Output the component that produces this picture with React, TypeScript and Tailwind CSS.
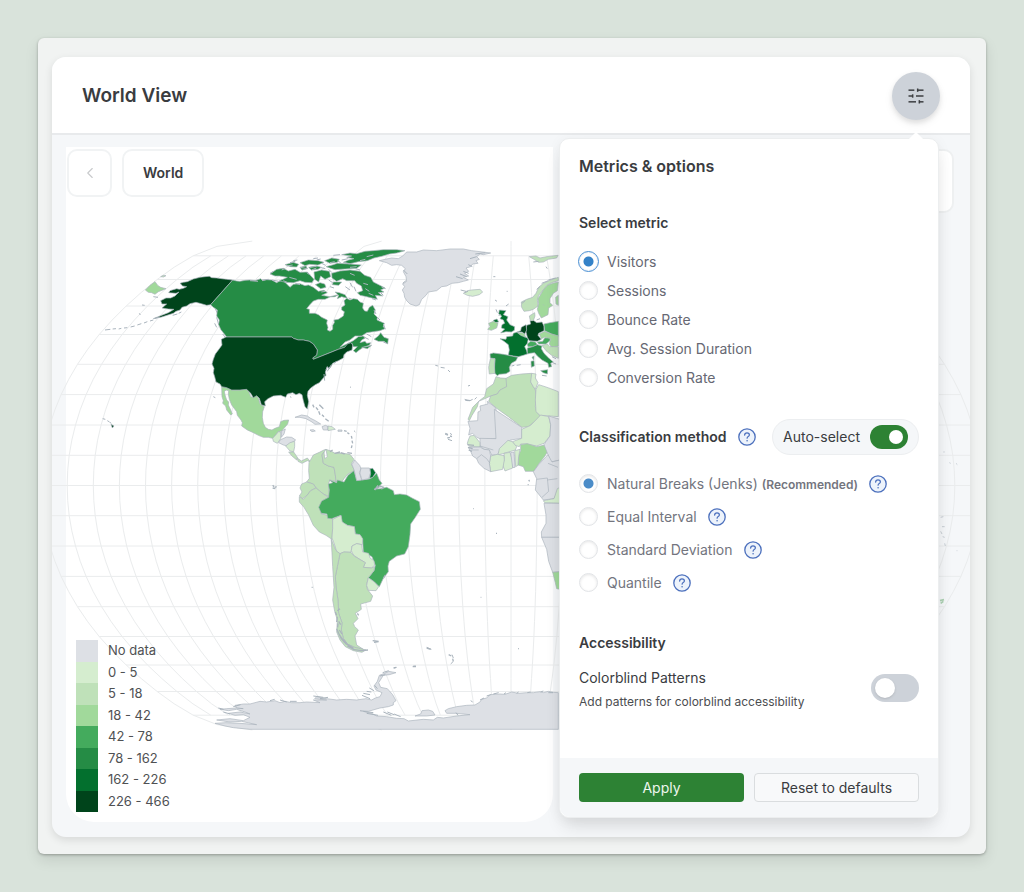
import { useState } from "react";
import type { ReactNode } from "react";
import { ChevronLeft, SlidersHorizontal } from "lucide-react";

/* ---------- map geometry ---------- */

const SCALE = 171.8;
const CENTER_X = 511;
const CENTER_Y = 485.5;

// Natural Earth projection
function project(lonDeg: number, latDeg: number): string {
  const lon = (lonDeg * Math.PI) / 180;
  const lat = (latDeg * Math.PI) / 180;
  const p2 = lat * lat;
  const p4 = p2 * p2;
  const x = lon * (0.8707 - 0.131979 * p2 + p4 * (-0.013791 + p4 * (0.003971 * p2 - 0.001529 * p4)));
  const y = lat * (1.007226 + p2 * (0.015085 + p4 * (-0.044475 + 0.028874 * p2 - 0.005916 * p4)));
  return `${(CENTER_X + SCALE * x).toFixed(1)},${(CENTER_Y - SCALE * y).toFixed(1)}`;
}

function buildGraticule(): string {
  const lines: string[] = [];
  for (let lon = -180; lon <= 180; lon += 10) {
    const limit = lon % 90 === 0 ? 90 : 80;
    const pts: string[] = [];
    for (let lat = -limit; lat <= limit; lat += 5) pts.push(project(lon, lat));
    lines.push("M" + pts.join("L"));
  }
  for (let lat = -80; lat <= 80; lat += 10) {
    lines.push("M" + project(-180, lat) + "L" + project(180, lat));
  }
  return lines.join("");
}

const graticule = buildGraticule();

const C = {
  none: "#dde0e5",
  c1: "#d5edcf",
  c2: "#bfe1b9",
  c3: "#a1d99b",
  c4: "#44ab5d",
  c5: "#258c45",
  c6: "#03702e",
  c7: "#00441b",
  coast: "#aab4bd",
};

type Shape = [string, string];

const pacific: Shape[] = [
  [C.c7, "578,150 560,148 545,146 530,144 515,143 508,139 495,140 480,142 460,147 442,155 430,157 420,160 428,168 440,170 430,175 418,178 410,176 390,182 386,188 408,190 417,186 405,198 392,204 378,204 362,212 366,222 380,222 366,234 385,237 402,238 385,248 362,257 340,266 365,261 400,250 408,244 420,240 426,232 440,228 450,221 468,217 484,221 500,226 512,224"],
  [C.c3, "316,180 330,166 345,155 354,167 362,172 378,176 366,181 355,185 345,193 335,188 325,187"],
  [C.c2, "362,140 370,136 378,137 371,141"],
  [C.c3, "545,470 560,473 575,480 600,480 620,477 628,488 632,500 640,502 650,497 656,506 660,522 673,530 668,545 667,562 670,580 676,592 685,598 696,600 705,595 718,590 722,575 732,571 746,570 743,582 732,595 725,603 715,605 710,612 698,625 685,622 670,622 655,616 640,608 622,600 605,588 607,578 603,570 592,556 590,545 575,525 568,508 565,492 566,482 558,480 553,485 556,498 560,510 566,516 565,525 572,540 577,552 572,555 560,540 557,528 548,520 550,512 546,500"],
  [C.c1, "698,625 710,612 715,605 722,606 722,626 712,640 700,634"],
  [C.none, "725,603 736,597 732,612 724,622"],
  [C.none, "720,630 740,621 755,622 767,630 752,640 742,648 730,645 716,638"],
  [C.c7, "213,583 222,588 217,594"],
];

const pacificSpecks =
  "M195,300l16,-2M218,297l10,-1M236,297l8,-2M252,294l10,-1M272,291l12,-3M292,285l12,-4M312,279l10,-4M330,273l10,-3M345,265l14,-4M188,566l8,2M202,572l5,3M208,576l6,4M340,200l14,2M306,225l8,1M298,250l3,5M398,256l14,-4M416,250l8,-4M526,236l8,18M532,232l10,20M538,252l8,26M530,262l6,22M524,280l6,12M538,284l10,18M545,300l8,10M540,232l4,16M548,312l16,20M556,306l8,16M520,500l6,3M750,500l4,2M600,155l20,1M630,154l30,-1M670,152l20,4M534,244l6,30M542,270l4,20";

const atlanticNorth: Shape[] = [
  [C.c5, "-52,150 -40,153 -30,154 -15,151 0,150 15,152 32,146 38,152 50,149 65,150 80,158 95,150 105,157 120,172 130,163 150,161 165,167 175,165 190,172 205,184 222,181 232,188 215,196 240,200 265,194 255,200 240,201 225,208 205,208 190,213 178,226 170,236 178,238 178,250 195,250 205,254 215,262 232,270 230,280 234,292 232,300 240,304 248,298 248,286 253,278 252,270 265,268 280,258 283,245 275,240 275,232 285,225 282,212 290,205 300,210 310,206 322,208 330,216 340,220 338,234 344,243 352,244 358,232 368,226 376,240 372,252 382,262 381,270 403,280 400,290 405,296 390,302 370,305 350,308 335,318 315,318 300,330 285,336 270,352 290,342 310,332 325,320 340,318 346,324 335,330 330,338 345,334 350,340 362,338 358,346 340,352 328,360 318,368 310,362 322,350 310,350 306,340 295,342 284,352 265,358 240,368 215,378 190,388 188,384 200,375 202,360 190,342 178,334 160,330 145,330 130,325 126,321 -70,321 -80,308 -88,298 -94,284 -92,270 -100,258 -98,240 -110,232 -118,224"],
  [C.c7, "-72,321 126,321 130,325 145,330 160,330 178,334 190,342 202,360 200,375 188,384 190,388 215,378 240,368 265,358 284,352 292,342 303,338 308,345 306,360 290,366 282,374 280,384 265,392 248,400 244,408 238,416 232,410 226,426 228,436 218,446 208,458 196,464 182,474 174,484 172,496 176,515 172,537 165,530 160,512 156,494 148,490 138,494 128,488 112,492 107,502 92,496 70,498 54,506 44,515 46,528 34,524 28,505 20,497 10,503 2,490 -10,478 -30,480 -55,480 -70,473 -85,470 -90,462 -102,456 -106,440 -110,428 -108,415 -114,402 -110,388 -104,372 -92,356 -84,345 -86,328"],
  [C.c5, "275,74 300,69 320,71 345,64 370,62 400,59 440,59 465,62 440,69 418,72 395,79 372,84 352,92 325,95 300,101 280,97 296,90 312,86 290,82 305,78"],
  [C.c5, "60,132 80,118 100,115 115,123 135,118 150,127 172,126 182,137 192,148 186,158 165,157 150,152 130,158 108,157 88,153 112,142 88,138 75,138"],
  [C.c5, "150,98 175,90 205,92 222,97 204,105 178,103 165,107"],
  [C.c5, "105,104 130,97 146,103 140,111 122,110"],
  [C.c5, "224,92 245,84 268,88 262,97 240,100"],
  [C.c5, "228,110 250,104 262,100 300,102 334,105 320,115 285,117 255,119"],
  [C.c5, "192,126 215,120 238,124 242,140 225,148 212,138 206,156 194,148"],
  [C.c5, "176,112 200,108 214,112 204,118 184,120"],
  [C.c5, "150,112 168,108 172,116 156,120"],
  [C.c5, "245,130 270,123 300,120 330,124 344,136 362,142 370,156 386,164 405,174 392,180 402,186 385,188 398,198 376,196 382,208 362,203 345,199 330,196 322,188 338,182 334,168 320,160 314,152 290,152 278,146 260,154 246,144"],
  [C.c5, "196,164 210,158 224,162 228,172 212,176"],
  [C.c5, "250,156 275,156 266,166 247,164"],
  [C.c5, "255,186 268,188 285,194 292,205 275,200 262,206 266,196"],
  [C.c5, "372,328 385,318 392,308 402,322 415,326 413,342 402,334 385,334"],
  [C.c5, "335,352 350,350 365,346 352,356"],
  [C.none, "388,92 405,88 425,84 445,86 458,78 470,66 500,66 520,60 560,62 600,57 640,57 665,62 690,65 722,69 700,74 690,72 680,80 688,88 678,92 684,100 668,102 662,110 648,114 656,124 644,130 656,138 640,142 655,150 640,154 625,158 605,160 590,168 575,170 560,182 535,186 528,196 515,208 508,224 498,228 480,222 470,212 464,202 462,190 457,180 464,170 458,162 470,154 468,140 460,125 466,116 455,106 440,104 425,106 410,98"],
  [C.c1, "640,190 652,182 665,180 690,178 698,186 688,194 668,199 652,196"],
  [C.c2, "838,80 858,78 870,84 890,80 924,76 920,84 895,88 880,96 866,97 852,88"],
  [C.c6, "748,240 768,242 760,254 774,260 770,270 780,284 794,290 793,301 784,306 768,305 752,309 764,297 754,294 756,284 764,280 760,270 750,266 755,258 746,252"],
  [C.c6, "730,271 741,267 746,276 734,278"],
  [C.c3, "716,280 730,274 744,280 740,294 724,301 713,298 720,290"],
  [C.c6, "750,326 768,328 770,320 788,318 790,310 802,306 815,314 835,326 832,340 824,350 830,362 832,372 820,376 805,380 790,378 775,375 778,360 775,344 762,334"],
  [C.c5, "720,372 730,369 760,373 775,376 803,382 798,392 784,400 778,412 780,424 768,431 748,433 742,437 733,428 735,386 721,384"],
  [C.c2, "721,386 735,386 733,405 735,430 718,432 716,412"],
  [C.c7, "830,286 842,282 840,272 850,271 860,278 876,276 882,288 882,302 866,310 864,316 874,328 862,334 838,332 832,322 828,306"],
  [C.c7, "802,306 812,302 814,292 828,284 830,300 824,312 816,306"],
  [C.c3, "802,308 816,308 824,313 826,322 812,316"],
  [C.c4, "882,282 900,278 925,274 925,318 905,312 884,302"],
  [C.c4, "832,342 842,334 856,336 862,344 848,350 834,350"],
  [C.c4, "862,336 878,334 884,324 900,322 900,332 888,342 866,342"],
  [C.c3, "868,312 884,304 904,312 925,318 925,348 905,352 898,342 902,326 884,322 874,326"],
  [C.c2, "876,346 892,342 900,350 925,350 925,385 905,376 888,362"],
  [C.c5, "832,354 848,350 862,344 876,348 874,356 882,370 896,384 910,396 902,400 905,410 896,412 894,400 876,390 862,378 854,368 840,370 832,372"],
  [C.c5, "872,422 893,419 892,432 880,428"],
  [C.c5, "843,394 852,392 853,408 844,412"],
  [C.c5, "846,382 852,378 851,390"],
  [C.c2, "814,216 830,208 848,202 858,190 866,172 880,160 902,150 925,142 925,152 905,158 890,166 880,180 866,196 862,210 864,228 850,238 838,242 822,244 815,232"],
  [C.c3, "864,206 880,180 892,166 908,160 925,156 922,182 910,190 900,206 900,218 908,226 896,234 894,254 874,264 866,250 862,238 866,222"],
  [C.c3, "917,202 925,196 925,226 918,222"],
  [C.c2, "838,258 854,248 855,258 850,272 841,272"],
  [C.c2, "738,440 752,444 768,445 773,458 770,470 748,482 742,492 722,498 700,508 686,514 682,530 666,556 658,572 654,568 668,532 688,512 704,500 710,476 730,462"],
  [C.c2, "768,445 785,436 815,432 845,430 846,444 842,456 856,480 858,500 856,530 860,545 872,560 835,590 816,592 775,560 740,535 716,514 722,498 742,492 750,480 770,470"],
  [C.c1, "845,430 858,432 856,444 864,458 856,478 850,470 842,456"],
  [C.c1, "866,464 885,470 902,476 925,485 925,560 900,558 870,556 858,545 856,510 858,478"],
  [C.none, "654,574 683,572 684,546 692,542 690,528 714,522 712,514 738,534 740,625 695,628 680,622 668,610 656,615 660,595"],
];

const northSpecks =
  "M275,90l20,-4M240,98l14,-3M200,90l12,-3M120,98l16,-4M110,108l18,-3M180,112l20,-3M215,100l12,6M150,112l22,4M300,112l20,-2M60,130l10,-6M95,120l10,-4M185,120l14,-6M236,118l10,10M330,92l16,-4M350,80l20,-5M390,186l10,10M366,206l12,4M395,172l12,4M372,240l6,12M382,262l8,8M400,282l6,16M655,104l12,6M640,124l16,6M630,132l20,8M618,140l20,6M660,86l20,-6M676,72l30,-4M460,120l12,12M458,160l10,-8M632,180l16,4M644,188l10,-4M850,96l16,-2M816,220l10,-8M860,178l10,-8M875,160l20,-8M895,150l22,-6M735,210l6,4M738,238l4,10M746,258l6,-6M768,228l8,-6M730,140l6,0M556,406l8,2M572,412l12,2M594,420l6,6M654,468l6,-2M644,508l8,4M660,512l8,-4M674,508l6,-6M300,472l3,-1M785,408l8,-2M800,406l12,-2M876,436l14,2M908,398l10,4M906,380l12,6M585,612l8,4M600,610l6,4M594,628l12,4M312,602l4,4M222,432l2,20M228,420l4,-10M236,418l8,-14M880,224l2,2M860,270l10,-4M888,110l4,6M770,184l3,0M350,312l14,8M340,320l16,8M66,150l20,4M0,152l24,2M36,150l20,-2M285,98l14,4M262,92l10,6M210,112l16,4M130,92l12,-2M190,86l14,-2M250,76l20,-2M316,116l14,4M170,128l12,8M118,142l22,6M236,150l12,8M300,158l8,14M312,170l6,14M286,170l14,10M240,170l12,4M214,186l12,-2M296,204l10,4M346,176l12,8M356,190l14,6M340,160l14,4M300,130l14,6M400,336l10,4M100,152l14,6M136,160l14,4M240,410l-8,14M252,400l8,-6";

const south: Shape[] = [
  [C.c1, "77,138 90,128 104,124 104,140 101,155 90,153"],
  [C.c2, "86,156 101,156 112,172 110,180 96,168"],
  [C.c2, "112,174 124,183 142,174 152,186 142,182 126,190 114,184"],
  [C.none, "105,52 125,45 142,48 152,55 166,62 182,72 165,73 156,66 138,56 120,52"],
  [C.none, "186,80 196,76 204,79 203,90 190,90"],
  [C.c1, "204,78 216,80 226,88 214,90 204,92"],
  [C.none, "150,90 160,89 166,93 156,95"],
  [C.none, "234,90 246,90 246,94 234,94"],
  [C.c2, "147,188 160,165 178,157 192,150 198,148 186,165 190,190 205,198 222,202 226,225 228,245 210,240 206,250 208,290 190,282 172,268 160,252 140,246 148,235 146,212"],
  [C.c2, "198,148 215,154 225,160 250,160 270,163 282,178 274,192 284,212 264,222 252,236 245,246 228,245 226,225 222,202 205,198 190,190 186,165 192,156 194,176 202,170"],
  [C.c2, "125,252 140,246 160,252 168,264 152,272 142,285 128,296 118,288 126,276 120,264"],
  [C.c2, "118,290 130,298 142,285 152,272 168,264 190,282 206,292 186,303 178,320 184,342 205,346 218,356 218,380 216,418 198,406 178,396 160,376 146,345 132,322 118,306"],
  [C.c4, "208,240 230,248 232,240 252,246 264,226 282,212 286,226 290,241 305,240 328,237 338,232 350,220 358,240 366,250 355,262 342,268 362,266 380,262 400,272 403,284 420,282 440,285 456,294 478,305 481,328 466,352 452,372 450,404 445,440 434,462 410,468 388,484 384,498 385,515 370,535 358,560 342,545 325,533 342,512 346,496 336,470 310,456 308,418 300,404 286,402 283,380 262,376 245,366 243,346 215,356 203,355 201,342 184,340 176,322 185,303 206,292 208,270 205,252 218,248"],
  [C.none, "283,212 276,194 284,180 299,196 303,206 298,218 305,240 290,242"],
  [C.none, "303,204 328,204 332,218 326,236 306,240 300,220"],
  [C.c6, "330,206 338,205 347,218 338,232 329,235 332,220"],
  [C.c1, "218,358 243,346 247,366 262,376 283,380 286,402 300,404 308,416 307,434 290,431 276,438 273,457 252,456 240,461 230,455 224,435 216,414 218,385"],
  [C.c1, "276,438 290,431 305,434 308,456 326,460 330,474 342,482 344,496 334,504 310,502 316,488 296,476 280,465 274,452"],
  [C.c2, "240,461 252,456 273,457 282,468 316,488 310,502 334,504 344,500 342,512 325,533 320,552 322,568 338,588 332,604 302,612 304,628 286,640 294,656 280,670 284,680 295,690 285,708 290,735 310,748 284,742 262,732 250,715 244,690 246,668 236,640 234,600 228,560 226,530 232,500"],
  [C.c2, "214,418 228,452 240,461 232,500 226,530 228,560 234,600 236,640 246,668 244,690 250,715 262,732 284,742 318,750 306,757 280,752 256,740 240,720 230,696 232,660 224,634 218,600 222,562 218,500"],
  [C.c1, "325,533 342,545 356,560 348,572 325,571 320,556"],
  [C.none, "660,138 660,115 708,116 703,28 785,82 785,115 752,120 722,145 712,165 695,165 688,150 672,148"],
  [C.c1, "785,88 812,76 842,45 866,50 872,74 870,108 852,130 830,138 800,132 782,132 778,140 765,136 757,125 785,115"],
  [C.c3, "782,134 802,131 830,140 850,136 862,134 866,150 852,172 836,192 822,214 796,214 790,200 774,195 776,165 782,152"],
  [C.c1, "714,165 718,146 744,121 757,125 770,140 766,150 746,156 732,160"],
  [C.c1, "732,160 750,157 757,180 758,204 735,213 728,195 733,178"],
  [C.c1, "692,168 712,163 732,167 733,180 728,208 692,215 688,190"],
  [C.none, "752,158 762,156 765,202 758,203"],
  [C.c1, "764,152 780,148 776,170 774,196 767,200"],
  [C.c1, "625,120 630,108 642,106 660,128 660,141 628,139 622,130"],
  [C.none, "625,142 660,141 672,148 688,150 692,168 688,190 692,215 672,205 656,190 650,176 638,168 632,154"],
  [C.none, "866,48 900,58 900,180 872,186 864,164 852,134 870,108 872,74"],
  [C.none, "836,194 864,164 876,186 900,180 900,262 882,296 850,300 826,270 830,236 820,215"],
  [C.c1, "850,302 882,296 892,266 900,262 900,310 854,308"],
  [C.none, "852,310 900,310 900,412 845,412 844,396 858,370 858,345"],
  [C.none, "845,412 900,412 900,515 878,517 866,484 860,448"],
  [C.c3, "878,517 900,515 900,568 890,566 886,548"],
];

const southLines =
  "M660,138l40,12M650,176l14,-12l16,12l10,14M632,150l24,0M830,238l32,-4l4,40l-20,18M862,240l30,-4M864,190l30,12";

const southSpecks =
  "M158,14l4,8M168,22l6,8M176,34l4,10M186,44l6,6M196,56l10,8M178,14l12,12M252,92l8,2M262,98l6,4M274,108l2,8M276,122l2,8M276,136l-2,8M262,158l14,2M224,160l16,-4M210,155l8,-5M242,158l12,4M556,100l8,4M562,114l8,-2M570,108l6,2M38,256l4,4M44,262l6,-2M38,264l8,2M622,134l20,2M624,142l14,4M626,150l10,4M616,0l14,2M338,722l18,2M342,727l14,-2M500,744l12,4M640,326l2,0M708,400l3,0M662,592l2,0M155,562l3,0M775,746l2,0M806,240l3,4M803,254l3,0M566,764l8,4M578,776l2,8M402,804l6,-2M458,800l10,0M292,640l4,6M350,266l12,-8M358,258l14,4M364,268l8,-6M344,270l10,-14M226,636l4,10M232,650l-2,16M234,670l-1,12M230,686l6,14M238,704l8,12M244,716l10,12M252,726l16,12M262,738l20,10M278,748l26,4M238,690l8,12M236,664l6,10M240,626l-8,6M304,752l20,-2M370,535l6,-10M234,696l10,20M242,712l18,18M256,730l24,14";

const antarctica =
  "-255,250 -225,258 -200,263 -150,268 775,268 775,158 760,157 745,154 730,158 720,155 700,158 680,158 655,160 635,156 615,163 600,162 570,164 560,174 545,178 540,186 525,195 500,196 470,200 445,206 435,212 440,220 470,220 510,224 470,228 430,234 412,232 400,240 370,238 325,243 312,236 290,235 260,230 230,228 215,220 180,212 205,214 240,204 265,200 280,195 280,188 288,182 278,164 262,146 242,142 236,128 250,106 268,104 288,98 266,94 254,100 238,106 232,124 222,138 228,150 246,158 240,170 226,174 215,180 198,176 170,180 140,178 110,180 80,176 50,170 44,176 80,180 40,180 60,188 20,186 0,188 -25,188 -45,184 -60,188 -75,182 -100,186 -120,184 -150,192 -170,192 -195,196 -190,204 -220,206 -240,208 -215,212 -190,208 -165,216 -150,222 -180,216 -215,220 -195,226 -170,224 -150,232 -170,242 -210,236 -250,240 -210,246 -175,244 -130,254 -180,250 -222,248";

const antarcticSpecks =
  "M-245,204l16,4M-230,216l20,6M-200,200l22,-6M-190,204l20,2M-60,180l20,6M-30,184l20,0M-90,182l14,-4M40,168l30,4M60,176l24,-4M190,160l20,4M186,166l24,10M200,154l14,2M208,144l14,8M224,136l8,10M248,98l18,-6M240,108l16,-4M280,84l10,-2M190,214l30,4M200,220l34,6M250,216l24,10M262,216l20,8M282,222l20,8M340,78l8,0M380,22l14,6M456,44l4,10M460,64l-8,8M512,182l6,4M540,180l12,-6M560,168l12,-4M580,162l16,-4M612,162l6,-4M650,160l6,-4M682,158l10,-2M722,156l8,-3M745,158l14,0M468,218l6,8M655,26l2,0";

function Shapes({ shapes }: { shapes: Shape[] }) {
  return (
    <>
      {shapes.map(([fill, points], i) => (
        <polygon key={i} points={points} fill={fill} />
      ))}
    </>
  );
}

function WorldMap() {
  return (
    <svg
      className="absolute inset-0 h-full w-full"
      viewBox="52 135 918 702"
      preserveAspectRatio="xMinYMin slice"
      role="img"
      aria-label="World map of visitors"
    >
      <path d={graticule} fill="none" stroke="#eaeced" strokeWidth="1" />
      <g stroke={C.coast} strokeWidth="2" strokeLinejoin="round">
        <g transform="translate(40 230) scale(.33333)">
          <Shapes shapes={pacific} />
          <path d={pacificSpecks} fill="none" strokeWidth="3" />
        </g>
        <g transform="translate(250 230) scale(.33333)">
          <Shapes shapes={atlanticNorth} />
          <path d={northSpecks} fill="none" strokeWidth="3" />
        </g>
        <g transform="translate(260 400) scale(.33333)">
          <Shapes shapes={south} />
          <path d={southLines} fill="none" />
          <path d={southSpecks} fill="none" strokeWidth="4" />
        </g>
        <g transform="translate(300 640) scale(.33333)">
          <polygon points={antarctica} fill={C.none} />
          <polygon points="345,228 362,222 366,212 385,210 398,214 405,225 380,228" fill={C.none} />
          <path d={antarcticSpecks} fill="none" strokeWidth="3" />
        </g>
        <g transform="translate(560 410) scale(.33333)" fill="none" strokeWidth="3" opacity="0.6">
          <path d="M1150,126l4,0M1168,158l4,2M1188,160l4,4M1142,322l8,-2M1146,350l8,0M1142,364l4,8M1148,380l6,2M1154,400l2,8M1190,422l2,0" />
          <path d="M1140,572l12,-3M1142,580l8,-6" stroke="#7cb984" strokeWidth="5" />
        </g>
      </g>
    </svg>
  );
}

/* ---------- controls ---------- */

function HelpButton({ topic }: { topic: string }) {
  return (
    <button type="button" aria-label={`Help: ${topic}`} className="shrink-0">
      <svg viewBox="0 0 20 20" className="size-5" fill="none" stroke="#4c70bd" strokeLinecap="round">
        <circle cx="10" cy="10" r="8.2" fill="#edf3fb" strokeWidth="1.3" />
        <path d="M7.6 8.100c.1-1.500 1.100-2.300 2.400-2.300s2.400.8 2.400 2.100c0 1.700-2.300 1.600-2.300 3.300" strokeWidth="1.200" />
        <circle cx="10.100" cy="13.700" r=".8" fill="#4c70bd" stroke="none" />
      </svg>
    </button>
  );
}

function Radio({
  name,
  label,
  checked,
  ring,
  onChange,
}: {
  name: string;
  label: ReactNode;
  checked: boolean;
  ring?: boolean;
  onChange: () => void;
}) {
  return (
    <label className="flex items-center gap-[9px]">
      <input
        type="radio"
        name={name}
        checked={checked}
        onChange={onChange}
        className={
          "size-[19px] shrink-0 appearance-none rounded-full border bg-white " +
          (ring
            ? "border-[#eef3f8] outline-[1.5px] outline-[#4a8fd3] checked:bg-[radial-gradient(circle,#3482c8_4.5px,white_5.5px)]"
            : "border-[#e2e4e7] shadow-[inset_0_1px_3px_rgba(0,0,0,0.1)] checked:bg-[radial-gradient(circle,#4b8cc8_4.5px,white_5.5px)]")
        }
      />
      <span>{label}</span>
    </label>
  );
}

const metrics = ["Visitors", "Sessions", "Bounce Rate", "Avg. Session Duration", "Conversion Rate"];
const methods = ["Natural Breaks (Jenks)", "Equal Interval", "Standard Deviation", "Quantile"];

function OptionsPanel() {
  const [metric, setMetric] = useState(metrics[0]);
  const [method, setMethod] = useState(methods[0]);
  const [auto, setAuto] = useState(true);
  const [patterns, setPatterns] = useState(false);

  return (
    <section
      aria-label="Metrics & options"
      className="absolute right-[31px] top-[81px] z-10 w-[380px] rounded-[10px] border border-[#eceeef] bg-white text-sm text-[#3a3c3f] shadow-[0_12px_18px_-4px_rgba(0,0,0,0.11),0_2px_14px_rgba(0,0,0,0.05)]"
    >
      <span className="absolute -top-[5px] right-[17px] size-2.5 rotate-45 bg-white" />
      <div className="relative px-[19px] pb-[46px] pt-[17px]">
        <h2 className="text-base font-semibold leading-5">Metrics &amp; options</h2>

        <h3 className="mt-[37px] font-semibold leading-5">Select metric</h3>
        <div className="mt-3.5 grid auto-rows-[29px] items-center text-[#666873]">
          {metrics.map((m) => (
            <Radio key={m} name="metric" label={m} checked={metric === m} ring={metric === m} onChange={() => setMetric(m)} />
          ))}
        </div>

        <div className="mt-[27px] flex h-9 items-center gap-2.5">
          <h3 className="font-semibold leading-5">Classification method</h3>
          <HelpButton topic="Classification method" />
          <label className="ml-auto flex h-9 items-center gap-2.5 rounded-full border border-[#eceef0] bg-[#f5f7f9] px-2.5">
            Auto-select
            <input
              type="checkbox"
              role="switch"
              checked={auto}
              onChange={() => setAuto(!auto)}
              className="h-6 w-[38px] appearance-none rounded-full bg-[#cdd2d9] p-[5px] before:block before:size-3.5 before:rounded-full before:bg-white checked:bg-[#2d8234] checked:before:ml-3.5"
            />
          </label>
        </div>
        <div className="mt-3 grid auto-rows-[33px] items-center text-[#73757e]">
          {methods.map((m, i) => (
            <div key={m} className="flex items-center gap-2.5">
              <Radio
                name="method"
                label={
                  i === 0 ? (
                    <>
                      {m} <strong className="text-xs font-semibold">(Recommended)</strong>
                    </>
                  ) : (
                    m
                  )
                }
                checked={method === m}
                onChange={() => setMethod(m)}
              />
              <HelpButton topic={m} />
            </div>
          ))}
        </div>

        <h3 className="mt-[34px] font-semibold leading-5">Accessibility</h3>
        <label className="mt-[15px] flex items-start justify-between">
          <span className="grid gap-1 leading-5">
            <span>Colorblind Patterns</span>
            <span className="text-xs leading-5 text-[#4b4d50]">Add patterns for colorblind accessibility</span>
          </span>
          <input
            type="checkbox"
            role="switch"
            checked={patterns}
            onChange={() => setPatterns(!patterns)}
            className="mt-1.5 h-7 w-12 appearance-none rounded-full bg-[#cdd2d9] p-1 before:block before:size-5 before:rounded-full before:bg-white before:shadow-sm checked:bg-[#2d8234] checked:before:ml-5"
          />
        </label>
      </div>
      <footer className="grid grid-cols-2 gap-2.5 rounded-b-[10px] bg-[#f5f7f9] px-[19px] py-[15px]">
        <button type="button" className="h-[29px] rounded bg-[#2d8234] text-[#eef7ee]">
          Apply
        </button>
        <button type="button" className="h-[29px] rounded border border-[#dadddf] bg-[#f8f9fa]">
          Reset to defaults
        </button>
      </footer>
    </section>
  );
}

const legend: [string, string][] = [
  ["bg-[#dde0e5]", "No data"],
  ["bg-[#d5edcf]", "0 - 5"],
  ["bg-[#bfe1b9]", "5 - 18"],
  ["bg-[#a1d99b]", "18 - 42"],
  ["bg-[#44ab5d]", "42 - 78"],
  ["bg-[#258c45]", "78 - 162"],
  ["bg-[#03702e]", "162 - 226"],
  ["bg-[#00441b]", "226 - 466"],
];

export default function App() {
  return (
    <div className="flex min-h-screen flex-col bg-[#d9e3db] p-[38px] font-['Inter','Liberation_Sans',sans-serif]">
      <div className="flex flex-1 flex-col rounded-md bg-[#f1f3f2] pb-[17px] pl-3.5 pr-4 pt-[19px] shadow-[0_1px_3px_rgba(0,0,0,0.28),0_6px_14px_rgba(0,0,0,0.1)]">
        <main className="relative flex flex-1 flex-col rounded-[14px] bg-[#f5f7f9] shadow-[0_3px_8px_rgba(0,0,0,0.11)]">
          <header className="flex h-[78px] items-center justify-between rounded-t-[14px] border-b-2 border-[#e8eaec] bg-white px-[30px] pt-0.5">
            <h1 className="text-[19px] font-semibold leading-6 text-[#3a3c3f]">World View</h1>
            <button
              type="button"
              aria-label="Metrics and options"
              className="flex size-12 items-center justify-center rounded-full bg-[#cdd2d9] text-[#3c3e41] shadow-[0_3px_5px_rgba(0,0,0,0.1),0_4px_8px_2px_rgba(0,0,0,0.03)]"
            >
              <SlidersHorizontal size={20} strokeWidth={1.8} strokeLinecap="butt" />
            </button>
          </header>

          <div className="relative flex flex-1 flex-col justify-between overflow-hidden rounded-b-[14px] pb-[25px] pl-[15px] pr-4 pt-3.5">
            <div className="absolute bottom-[15px] left-3.5 top-3 w-[53%] rounded-b-[28px] bg-white" />
            <WorldMap />
            <nav aria-label="Region" className="relative flex items-start gap-2.5">
              <button
                type="button"
                aria-label="Back"
                disabled
                className="flex h-12 w-[45px] items-center justify-center rounded-[10px] border-2 border-[#f1f3f4] bg-white text-[#c8cacc]"
              >
                <ChevronLeft size={18} strokeWidth={1.5} />
              </button>
              <button
                type="button"
                className="h-12 rounded-[10px] border-2 border-[#f1f3f4] bg-white px-[19px] text-sm font-semibold text-[#3a3c3f]"
              >
                World
              </button>
              <div className="ml-auto h-16 w-12 rounded-[10px] border-2 border-[#eef0f1] bg-white" />
            </nav>
            <ul className="relative ml-[9px] grid h-[172px] grid-rows-8 text-[13px] text-[#4f5153]">
              {legend.map(([swatch, label]) => (
                <li key={label} className="flex items-center gap-2.5">
                  <span className={"h-full w-[22px] " + swatch} />
                  {label}
                </li>
              ))}
            </ul>
          </div>

          <OptionsPanel />
        </main>
      </div>
    </div>
  );
}
